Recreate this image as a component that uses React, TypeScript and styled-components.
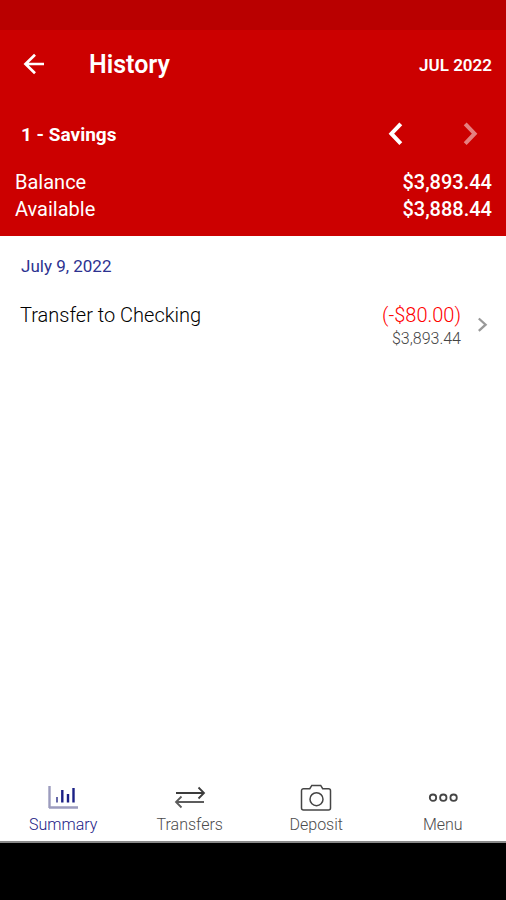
import React from "react";
import styled, { createGlobalStyle } from "styled-components";

const GlobalStyle = createGlobalStyle`
  * { box-sizing: border-box; }
  body { margin: 0; background: #ffffff; font-family: Roboto, sans-serif; }
  h1, h2, p, dl, dt, dd, ul { margin: 0; padding: 0; }
  button { border: 0; padding: 0; background: none; font: inherit; color: inherit; cursor: pointer; }
  svg { display: block; }
`;

const Screen = styled.div`
  min-height: 100vh;
  display: flex;
  flex-direction: column;
`;

const StatusBar = styled.div`
  height: 30px;
  background: #b90000;
`;

const Header = styled.header`
  background: #cc0000;
  color: #ffffff;
  padding-bottom: 13px;
`;

const AppBar = styled.div`
  display: flex;
  align-items: center;
  height: 70px;
  padding: 0 14px 0 20px;
`;

const IconButton = styled.button`
  display: flex;
  align-items: center;
  justify-content: center;
  width: 28px;
  height: 40px;

  &:disabled { opacity: 0.5; cursor: default; }
`;

const Title = styled.h1`
  flex: 1;
  margin-left: 41px;
  font-size: 25px;
  line-height: 32px;
  font-weight: 600;
`;

const MonthButton = styled.button`
  font-size: 17px;
  line-height: 24px;
  font-weight: 600;
`;

const AccountBar = styled.div`
  display: flex;
  align-items: center;
  height: 69px;
  padding: 0 22px 0 21px;
`;

const AccountName = styled.h2`
  flex: 1;
  font-size: 19px;
  line-height: 24px;
  font-weight: 700;
`;

const Pager = styled.div`
  display: flex;
  gap: 46px;
`;

const Totals = styled.dl`
  padding: 0 14px 0 15px;
`;

const TotalRow = styled.div`
  display: flex;
  justify-content: space-between;
  font-size: 20px;
  line-height: 27px;
`;

const TotalLabel = styled.dt`
  font-weight: 400;
`;

const TotalValue = styled.dd`
  font-weight: 500;
`;

const History = styled.main`
  flex: 1;
  background: #ffffff;
`;

const DateHeading = styled.h2`
  padding: 18px 21px;
  font-size: 17px;
  line-height: 24px;
  font-weight: 400;
  color: #2d3290;
`;

const TransactionRow = styled.button`
  display: flex;
  align-items: center;
  width: 100%;
  padding: 6px 18px 6px 20px;
  text-align: left;
`;

const Description = styled.span`
  flex: 1;
  align-self: flex-start;
  font-size: 20px;
  line-height: 26px;
  font-weight: 300;
  color: #000000;
`;

const Amounts = styled.span`
  display: flex;
  flex-direction: column;
  text-align: right;
  margin-right: 15px;
`;

const Amount = styled.span`
  font-size: 20px;
  line-height: 26px;
  font-weight: 300;
  color: #ff0000;
`;

const RunningBalance = styled.span`
  font-size: 16px;
  line-height: 21px;
  font-weight: 300;
  color: #444444;
`;

const TabBar = styled.nav`
  display: flex;
  height: 72px;
  background: #ffffff;
  border-bottom: 2px solid #8a8a8a;
`;

const Tab = styled.button<{ $active?: boolean }>`
  flex: 1;
  display: flex;
  flex-direction: column;
  align-items: center;
  justify-content: flex-end;
  gap: 1px;
  padding-bottom: 5px;
  font-size: 16px;
  line-height: 22px;
  font-weight: 300;
  color: ${(p) => (p.$active ? "#1c2186" : "#4c4c4c")};
`;

const SystemBar = styled.div`
  height: 57px;
  background: #000000;
`;

const BackIcon = () => (
  <svg width="28" height="28" viewBox="0 0 28 28" fill="none" stroke="currentColor" strokeWidth="2.7" aria-hidden="true">
    <path d="M24 13H5.5M15 3.7L5.5 13l9.5 9.3" />
  </svg>
);

const PagerIcon = ({ next = false }: { next?: boolean }) => (
  <svg width="28" height="28" viewBox="0 0 28 28" fill="none" stroke="currentColor" strokeWidth="4" aria-hidden="true">
    <path d={next ? "M9.2 2.8L18.6 12.7l-9.4 9.9" : "M18.8 2.8L9.4 12.7l9.4 9.9"} />
  </svg>
);

const RowChevron = () => (
  <svg width="12" height="18" viewBox="0 0 12 18" fill="none" stroke="#999999" strokeWidth="2.3" aria-hidden="true">
    <path d="M2.8 1.5L9.6 7.7l-6.8 6.2" />
  </svg>
);

const SummaryIcon = () => (
  <svg width="32" height="30" viewBox="0 0 32 30" fill="none" aria-hidden="true">
    <path d="M2.5 3v22M2 24.5h29" stroke="#9c9cbe" strokeWidth="2.4" />
    <path d="M10 14v5.5" stroke="#6669a8" strokeWidth="2" />
    <path d="M15.3 7v12.5M21 11v8.5M26.5 5v14.5" stroke="#1c2186" strokeWidth="2.4" />
  </svg>
);

const TransfersIcon = () => (
  <svg width="32" height="30" viewBox="0 0 32 30" fill="none" strokeWidth="1.8" aria-hidden="true">
    <path d="M2 10h28M24.5 4.500L30 10L24.500 15.500" stroke="#3c3c3c" />
    <path d="M30 19H2M7.500 13.500L2 19L7.500 24.500" stroke="#5c5c5c" />
  </svg>
);

const CameraIcon = () => (
  <svg width="32" height="30" viewBox="0 0 32 30" fill="none" stroke="#454545" strokeWidth="1.5" aria-hidden="true">
    <path d="M3.5 5.700h6.300l2-3.300h8.900l2 3.300h5.800a2 2 0 0 1 2 2v17.200a2 2 0 0 1-2 2h-25a2 2 0 0 1-2-2V7.700a2 2 0 0 1 2-2z" />
    <circle cx="16.5" cy="16.2" r="6.5" />
  </svg>
);

const MenuIcon = () => (
  <svg width="32" height="30" viewBox="0 0 32 30" fill="none" stroke="#454545" strokeWidth="1.8" aria-hidden="true">
    <circle cx="6" cy="14.7" r="3.2" />
    <circle cx="16.3" cy="14.7" r="3.2" />
    <circle cx="26.6" cy="14.7" r="3.2" />
  </svg>
);

const totals = [
  { label: "Balance", value: "$3,893.44" },
  { label: "Available", value: "$3,888.44" },
];

const tabs = [
  { label: "Summary", Icon: SummaryIcon },
  { label: "Transfers", Icon: TransfersIcon },
  { label: "Deposit", Icon: CameraIcon },
  { label: "Menu", Icon: MenuIcon },
];

export default function App() {
  return (
    <>
      <GlobalStyle />
      <Screen>
        <StatusBar />
        <Header>
          <AppBar>
            <IconButton type="button" aria-label="Back">
              <BackIcon />
            </IconButton>
            <Title>History</Title>
            <MonthButton type="button">JUL 2022</MonthButton>
          </AppBar>
          <AccountBar>
            <AccountName>1 - Savings</AccountName>
            <Pager>
              <IconButton type="button" aria-label="Previous account">
                <PagerIcon />
              </IconButton>
              <IconButton type="button" aria-label="Next account" disabled>
                <PagerIcon next />
              </IconButton>
            </Pager>
          </AccountBar>
          <Totals>
            {totals.map((t) => (
              <TotalRow key={t.label}>
                <TotalLabel>{t.label}</TotalLabel>
                <TotalValue>{t.value}</TotalValue>
              </TotalRow>
            ))}
          </Totals>
        </Header>
        <History>
          <DateHeading>July 9, 2022</DateHeading>
          <TransactionRow type="button">
            <Description>Transfer to Checking</Description>
            <Amounts>
              <Amount>(-$80.00)</Amount>
              <RunningBalance>$3,893.44</RunningBalance>
            </Amounts>
            <RowChevron />
          </TransactionRow>
        </History>
        <TabBar aria-label="Main">
          {tabs.map(({ label, Icon }, i) => (
            <Tab key={label} type="button" $active={i === 0} aria-current={i === 0 ? "page" : undefined}>
              <Icon />
              {label}
            </Tab>
          ))}
        </TabBar>
        <SystemBar />
      </Screen>
    </>
  );
}
